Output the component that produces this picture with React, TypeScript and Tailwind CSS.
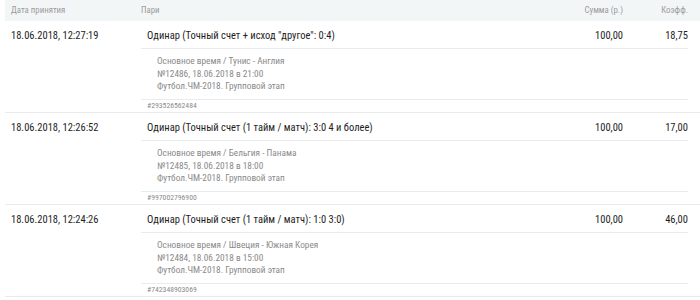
type Bet = {
	date: string
	title: string
	time: string
	match: string
	event: string
	league: string
	hash: string
	sum: string
	coef: string
}

const bets: Bet[] = [
	{
		date: '18.06.2018, 12:27:19',
		title: 'Одинар (Точный счет + исход "другое": 0:4)',
		time: 'Основное время',
		match: 'Тунис - Англия',
		event: '№12486, 18.06.2018 в 21:00',
		league: 'Футбол.ЧМ-2018. Групповой этап',
		hash: '#293526562484',
		sum: '100,00',
		coef: '18,75',
	},
	{
		date: '18.06.2018, 12:26:52',
		title: 'Одинар (Точный счет (1 тайм / матч): 3:0 4 и более)',
		time: 'Основное время',
		match: 'Бельгия - Панама',
		event: '№12485, 18.06.2018 в 18:00',
		league: 'Футбол.ЧМ-2018. Групповой этап',
		hash: '#997002796900',
		sum: '100,00',
		coef: '17,00',
	},
	{
		date: '18.06.2018, 12:24:26',
		title: 'Одинар (Точный счет (1 тайм / матч): 1:0 3:0)',
		time: 'Основное время',
		match: 'Швеция - Южная Корея',
		event: '№12484, 18.06.2018 в 15:00',
		league: 'Футбол.ЧМ-2018. Групповой этап',
		hash: '#742348903069',
		sum: '100,00',
		coef: '46,00',
	},
]

function BetRow({ bet }: { bet: Bet }) {
	return (
		<div className="flex h-[92px] border-b border-[#e9ebec]">
			<div className="w-[136px] shrink-0 pl-[6px] pt-[8px] text-[10.5px] leading-[14px] text-[#1e1e1e]">{bet.date}</div>
			<div className="mr-[12px] flex flex-1 flex-col">
				<div className="flex h-[28px] shrink-0 items-center border-b border-[#e9ebec] pt-[2px] text-[10.5px] text-[#1e1e1e]">
					<div className="flex-1 truncate pl-[6px]">{bet.title}</div>
					<div className="w-[100px] text-right">{bet.sum}</div>
					<div className="w-[65px] text-right">{bet.coef}</div>
				</div>
				<div className="flex h-[51px] shrink-0 flex-col justify-center border-b border-[#e9ebec] pl-[16px] text-[9.3px] leading-[12.5px] text-[#8a8a8a]">
					<p>
						{bet.time} / {bet.match}
					</p>
					<p>{bet.event}</p>
					<p>{bet.league}</p>
				</div>
				<div className="flex flex-1 items-center pl-[6px] text-[7.7px] text-[#8a8a8a]">{bet.hash}</div>
			</div>
		</div>
	)
}

export default function App() {
	return (
		<div className="h-[300px] w-[700px] overflow-hidden bg-white pl-[5px] font-['Roboto',sans-serif] [font-stretch:75%]">
			<div className="flex h-[21px] items-center bg-[#f2f6f7] pr-[12px] text-[8.8px] text-[#9b9b9b]">
				<div className="w-[136px] shrink-0 pl-[6px]">Дата принятия</div>
				<div className="flex-1">Пари</div>
				<div className="w-[100px] text-right">Сумма (р.)</div>
				<div className="w-[65px] text-right">Коэфф.</div>
			</div>
			{bets.map((bet) => (
				<BetRow key={bet.hash} bet={bet} />
			))}
		</div>
	)
}
